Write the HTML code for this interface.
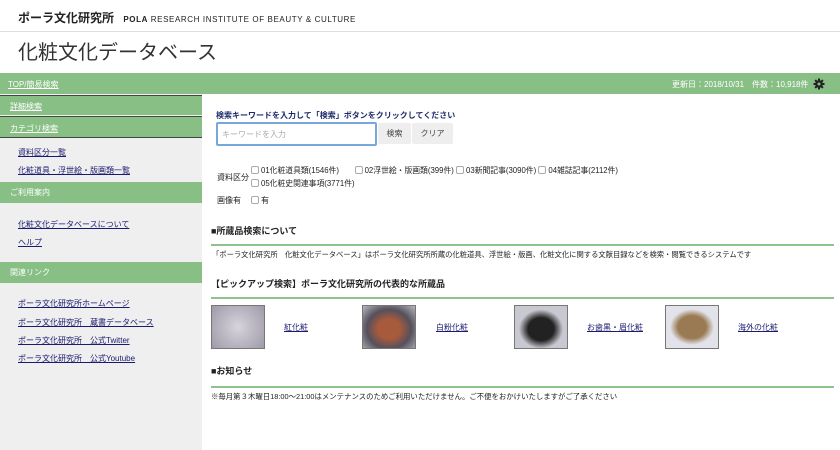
<!DOCTYPE html>
<html><head><meta charset="utf-8"><style>
*{margin:0;padding:0;box-sizing:border-box}
body{width:840px;height:450px;overflow:hidden;background:#fff;font-family:"Liberation Sans","Noto Sans CJK JP",sans-serif;color:#222;position:relative}
.a{position:absolute;white-space:nowrap}
.g{background:#87bf85;color:#fff;font-size:8px}
.lk{color:#1a1a6e;text-decoration:underline;font-size:8px}
.cb{display:inline-block;width:8px;height:8px;border:1px solid #aaa;border-radius:2px;vertical-align:-1px;margin-right:2px;background:#fff}
.hl{position:absolute;left:211px;width:623px;height:2px;background:#8fc28c}
.img{position:absolute;top:305px;width:54px;height:44px;border:1px solid #777}
</style></head><body>
<div class="a" style="left:18px;top:9px;font-size:12px;font-weight:bold">ポーラ文化研究所 <span style="font-size:8px;letter-spacing:0.6px;margin-left:6px"><b>POLA</b> <span style="font-weight:normal">RESEARCH INSTITUTE OF BEAUTY &amp; CULTURE</span></span></div>
<div class="a" style="left:0;top:31px;width:840px;height:1px;background:#ddd"></div>
<div class="a" style="left:18px;top:36px;font-size:20px;color:#333">化粧文化データベース</div>
<div class="a g" style="left:0;top:73px;width:840px;height:21px"></div>
<div class="a" style="left:8px;top:79px;font-size:8px;color:#fff;text-decoration:underline">TOP/簡易検索</div>
<div class="a" style="left:672px;top:79px;font-size:8px;color:#fff">更新日：2018/10/31　件数：10,918件</div>
<svg class="a" style="left:813px;top:78px" width="12" height="12" viewBox="0 0 12 12"><g fill="#222"><circle cx="6" cy="6" r="3.8"/><rect x="5" y="0.5" width="2" height="11"/><rect x="0.5" y="5" width="11" height="2"/><rect x="5" y="0.5" width="2" height="11" transform="rotate(45 6 6)"/><rect x="5" y="0.5" width="2" height="11" transform="rotate(-45 6 6)"/></g><circle cx="6" cy="6" r="1.5" fill="#87bf85"/></svg>
<div class="a" style="left:0;top:94px;width:202px;height:356px;background:#efefef"></div>
<div class="a g" style="left:0;top:95px;width:202px;height:20px;border-top:1px solid #444;padding:5px 10px"><u>詳細検索</u></div>
<div class="a g" style="left:0;top:116px;width:202px;height:22px;border-top:1px solid #444;border-bottom:1px solid #444;padding:6px 10px"><u>カテゴリ検索</u></div>
<div class="a lk" style="left:18px;top:147px">資料区分一覧</div>
<div class="a lk" style="left:18px;top:165px">化粧道具・浮世絵・版画類一覧</div>
<div class="a g" style="left:0;top:182px;width:202px;height:21px;padding:5px 10px">ご利用案内</div>
<div class="a lk" style="left:18px;top:219px">化粧文化データベースについて</div>
<div class="a lk" style="left:18px;top:237px">ヘルプ</div>
<div class="a g" style="left:0;top:262px;width:202px;height:21px;padding:5px 10px">関連リンク</div>
<div class="a lk" style="left:18px;top:298px">ポーラ文化研究所ホームページ</div>
<div class="a lk" style="left:18px;top:317px">ポーラ文化研究所　蔵書データベース</div>
<div class="a lk" style="left:18px;top:335px">ポーラ文化研究所　公式Twitter</div>
<div class="a lk" style="left:18px;top:353px">ポーラ文化研究所　公式Youtube</div>

<div class="a" style="left:216px;top:110px;font-size:8px;font-weight:bold;color:#1c2a6a">検索キーワードを入力して「検索」ボタンをクリックしてください</div>
<div class="a" style="left:216px;top:122px;width:161px;height:24px;border:2px solid #7aa7db;border-radius:2px;font-size:8px;color:#aaa;padding:5px 4px">キーワードを入力</div>
<div class="a" style="left:378px;top:123px;width:33px;height:21px;background:#eee;border-radius:2px;font-size:8px;color:#444;text-align:center;line-height:21px">検索</div>
<div class="a" style="left:412px;top:123px;width:41px;height:21px;background:#eee;border-radius:2px;font-size:8px;color:#444;text-align:center;line-height:21px">クリア</div>
<div class="a" style="left:217px;top:172px;font-size:8px">資料区分</div>
<div class="a" style="left:251px;top:165px;font-size:7.8px"><span class="cb"></span>01化粧道具類(1546件)　　<span class="cb"></span>02浮世絵・版画類(399件) <span class="cb"></span>03新聞記事(3090件) <span class="cb"></span>04雑誌記事(2112件)</div>
<div class="a" style="left:251px;top:178px;font-size:7.8px"><span class="cb"></span>05化粧史関連事項(3771件)</div>
<div class="a" style="left:217px;top:195px;font-size:8px">画像有　<span class="cb" style="margin-left:2px"></span>有</div>

<div class="a" style="left:211px;top:224px;font-size:9px;font-weight:bold">■所蔵品検索について</div>
<div class="hl" style="top:244px"></div>
<div class="a" style="left:212px;top:250px;font-size:7.3px">「ポーラ文化研究所　化粧文化データベース」はポーラ文化研究所所蔵の化粧道具、浮世絵・版画、化粧文化に関する文献目録などを検索・閲覧できるシステムです</div>
<div class="a" style="left:211px;top:277px;font-size:9px;font-weight:bold">【ピックアップ検索】ポーラ文化研究所の代表的な所蔵品</div>
<div class="hl" style="top:297px"></div>
<div class="img" style="left:211px;background:radial-gradient(circle at 50% 50%,#d8d4dc,#9e9aa8)"></div>
<div class="img" style="left:362px;background:radial-gradient(ellipse at 50% 55%,#a85a3c 0 30%,#55505c 60%,#b8b8c0)"></div>
<div class="img" style="left:514px;background:radial-gradient(ellipse at 50% 55%,#222 0 35%,#c8c8d0 60%)"></div>
<div class="img" style="left:665px;background:radial-gradient(ellipse at 50% 50%,#9a7a52 0 38%,#e2e2ea 60%)"></div>
<div class="a lk" style="left:284px;top:322px">紅化粧</div>
<div class="a lk" style="left:436px;top:322px">白粉化粧</div>
<div class="a lk" style="left:587px;top:322px">お歯黒・眉化粧</div>
<div class="a lk" style="left:738px;top:322px">海外の化粧</div>
<div class="a" style="left:211px;top:364px;font-size:9px;font-weight:bold">■お知らせ</div>
<div class="hl" style="top:386px"></div>
<div class="a" style="left:211px;top:391px;font-size:7.4px">※毎月第３木曜日18:00〜21:00はメンテナンスのためご利用いただけません。ご不便をおかけいたしますがご了承ください</div>
</body></html>
